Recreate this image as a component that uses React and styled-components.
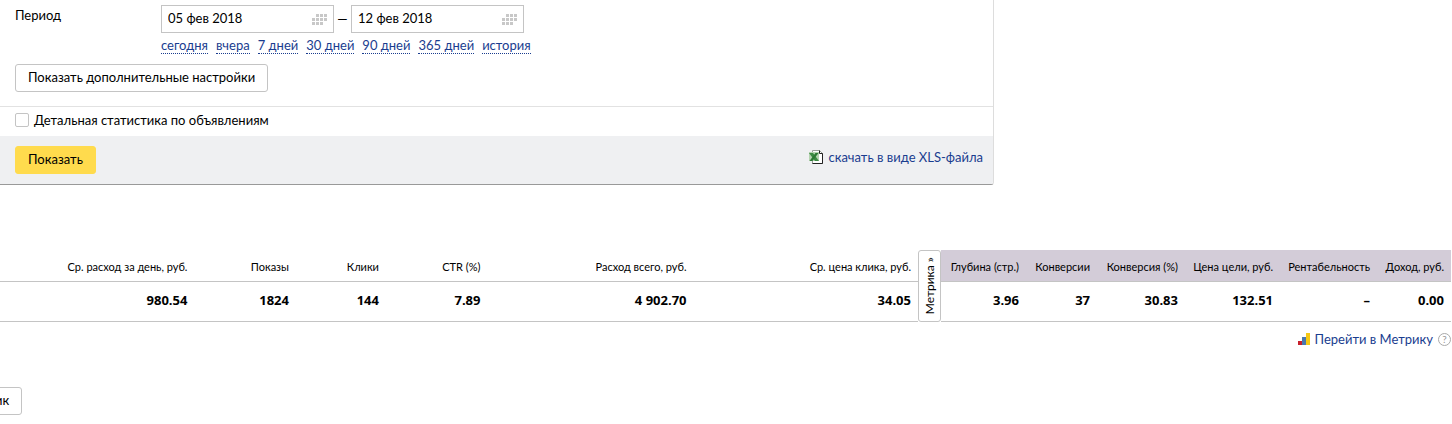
import React, { useState } from "react";
import styled, { createGlobalStyle } from "styled-components";

const GlobalStyle = createGlobalStyle`
  * {
    box-sizing: border-box;
  }

  body {
    margin: 0;
    background: #fff;
    color: #000;
    font-family: Lato, "Open Sans", sans-serif;
    font-size: 13px;
    line-height: 18px;
  }

  button,
  input {
    font: inherit;
    color: inherit;
  }
`;

const Page = styled.main`
  padding-right: 1px;
`;

const FilterForm = styled.form`
  max-width: 994px;
  border-right: 1px solid #ddd;
  border-bottom: 1px solid #999;
  border-bottom-right-radius: 3px;
  overflow: hidden;
`;

const FilterBody = styled.div`
  padding: 5px 15px 14px;
  border-bottom: 1px solid #e2e2e2;
`;

const PeriodRow = styled.div`
  display: grid;
  grid-template-columns: 146px 1fr;
  margin-bottom: 10px;
`;

const PeriodLabel = styled.div`
  padding-top: 1px;
`;

const DateRange = styled.div`
  display: flex;
  align-items: center;
  gap: 2px;
`;

const Dash = styled.span`
  width: 13px;
  text-align: center;
`;

const DateField = styled.label`
  display: flex;
  align-items: center;
  width: 173px;
  height: 28px;
  padding: 0 6px;
  border: 1px solid #c4c4c4;
`;

const DateInput = styled.input`
  flex: 1;
  min-width: 0;
  padding: 0 0 2px;
  border: 0;
  outline: 0;
  background: none;
`;

const Presets = styled.div`
  display: flex;
  gap: 8px;
  margin-top: 3px;
`;

const PresetLink = styled.a`
  height: 18px;
  line-height: 18px;
  color: #1a3d8f;
  text-decoration: none;
  border-bottom: 1px dotted #1a3d8f;
`;

const Button = styled.button`
  height: 28px;
  padding: 0 12px 2px;
  border: 1px solid ${(props) => (props.$primary ? "#ffdb4d" : "#c4c4c4")};
  border-radius: 3px;
  background: ${(props) => (props.$primary ? "#ffdb4d" : "#fff")};
  cursor: pointer;
`;

const CutButton = styled(Button)`
  margin: 39px 0 0 -18px;
`;

const CheckRow = styled.label`
  display: flex;
  align-items: center;
  gap: 5px;
  height: 29px;
  padding: 0 15px 3px;
`;

const Checkbox = styled.input`
  appearance: none;
  width: 14px;
  height: 14px;
  margin: 0;
  border: 1px solid #c4c4c4;
  border-radius: 2px;
  background: #fff;

  &:checked {
    background: #ffdb4d;
  }
`;

const FormFooter = styled.div`
  display: flex;
  align-items: flex-start;
  justify-content: space-between;
  height: 48px;
  padding: 10px 10px 0 15px;
  background: #eff0f2;
`;

const IconLink = styled.a`
  display: flex;
  align-items: center;
  gap: 5px;
  padding-top: 2px;
  color: #1a3d8f;
  text-decoration: none;
`;

const StatTable = styled.table`
  width: 100%;
  margin-top: 65px;
  table-layout: fixed;
  border-collapse: separate;
  border-spacing: 0;
`;

const HeadCell = styled.th`
  height: 32px;
  padding: 2px 7px 0 0;
  border-bottom: 1px solid #c4c4c4;
  background: ${(props) => (props.$metrika ? "#d3ccd8" : "none")};
  font-size: 11px;
  font-weight: 400;
  text-align: right;
  white-space: nowrap;
`;

const Cell = styled.td`
  height: 40px;
  padding: 0 7px 3px 0;
  border-bottom: 1px solid #c4c4c4;
  font-family: "Open Sans", sans-serif;
  font-weight: 700;
  text-align: right;
  white-space: nowrap;
`;

const ToggleCell = styled.td`
  height: 72px;
  padding: 0;
`;

const MetrikaToggle = styled.button`
  display: flex;
  align-items: center;
  justify-content: center;
  width: 100%;
  height: 72px;
  padding: 0;
  border: 1px solid #c4c4c4;
  border-radius: 3px;
  background: #fff;
  cursor: pointer;
`;

const VerticalText = styled.span`
  writing-mode: vertical-rl;
  transform: rotate(180deg);
  font-size: 12px;
`;

const TableFooter = styled.div`
  display: flex;
  align-items: center;
  justify-content: flex-end;
  gap: 5px;
  margin-top: 6px;
`;

const HelpButton = styled.button`
  width: 13px;
  height: 13px;
  margin-top: 2px;
  padding: 0;
  border: 1px solid #aaa;
  border-radius: 50%;
  background: none;
  color: #999;
  font-size: 10px;
  line-height: 11px;
  cursor: pointer;
`;

const Col = styled.col`
  width: ${(props) => props.$width || "auto"};
`;

const presets = [
  "сегодня",
  "вчера",
  "7 дней",
  "30 дней",
  "90 дней",
  "365 дней",
  "история",
];

const mainColumns = [
  { title: "Ср. расход за день, руб.", value: "980.54", width: "13.4%" },
  { title: "Показы", value: "1824", width: "7%" },
  { title: "Клики", value: "144", width: "6.2%" },
  { title: "CTR (%)", value: "7.89", width: "7%" },
  { title: "Расход всего, руб.", value: "4 902.70", width: "14.2%" },
  { title: "Ср. цена клика, руб.", value: "34.05" },
];

const metrikaColumns = [
  { title: "Глубина (стр.)", value: "3.96", width: "85px" },
  { title: "Конверсии", value: "37", width: "71px" },
  { title: "Конверсия (%)", value: "30.83", width: "88px" },
  { title: "Цена цели, руб.", value: "132.51", width: "95px" },
  { title: "Рентабельность", value: "–", width: "97px" },
  { title: "Доход, руб.", value: "0.00", width: "74px" },
];

// [x, y] of every day square
const days = [
  [4, 0], [8, 0], [12, 0],
  [0, 4], [4, 4], [8, 4], [12, 4],
  [0, 8], [4, 8], [8, 8],
];

function CalendarIcon() {
  return (
    <svg width="15" height="11" viewBox="0 0 15 11" aria-hidden="true">
      {days.map(([x, y]) => (
        <rect key={`${x}-${y}`} x={x} y={y} width="3" height="3" fill="#c8c8c8" />
      ))}
    </svg>
  );
}

function XlsIcon() {
  return (
    <svg width="14" height="14" viewBox="0 0 14 14" aria-hidden="true">
      <path d="M3.5 .5H10.5L13.5 3.5V13.5H3.5Z" fill="#fff" stroke="#9aa09a" />
      <path d="M10.5 .5V3.5H13.5V13.5H3.5" fill="none" stroke="#222" />
      <rect x="0" y="2" width="10" height="9" fill="#b5d3b0" />
      <path d="M0 3H4L10 11H6Z" fill="#3c8a43" />
      <path d="M6.5 3H9.5L3.5 11H.5Z" fill="#2c7a33" />
    </svg>
  );
}

function MetrikaIcon() {
  return (
    <svg width="12" height="12" viewBox="0 0 12 12" aria-hidden="true">
      <rect x="0" y="8" width="4" height="4" fill="#c8202c" />
      <rect x="4" y="4" width="4" height="8" fill="#4a78b0" />
      <rect x="8" y="0" width="4" height="12" fill="#f6c915" />
    </svg>
  );
}

function App() {
  const [from, setFrom] = useState("05 фев 2018");
  const [to, setTo] = useState("12 фев 2018");
  const [detailed, setDetailed] = useState(false);

  return (
    <Page>
      <GlobalStyle />
      <FilterForm onSubmit={(e) => e.preventDefault()}>
        <FilterBody>
          <PeriodRow>
            <PeriodLabel id="period">Период</PeriodLabel>
            <div>
              <DateRange>
                <DateField>
                  <DateInput
                    aria-labelledby="period"
                    value={from}
                    onChange={(e) => setFrom(e.target.value)}
                  />
                  <CalendarIcon />
                </DateField>
                <Dash>—</Dash>
                <DateField>
                  <DateInput
                    aria-labelledby="period"
                    value={to}
                    onChange={(e) => setTo(e.target.value)}
                  />
                  <CalendarIcon />
                </DateField>
              </DateRange>
              <Presets>
                {presets.map((name) => (
                  <PresetLink key={name} href="#">
                    {name}
                  </PresetLink>
                ))}
              </Presets>
            </div>
          </PeriodRow>
          <Button type="button">Показать дополнительные настройки</Button>
        </FilterBody>
        <CheckRow>
          <Checkbox
            type="checkbox"
            checked={detailed}
            onChange={(e) => setDetailed(e.target.checked)}
          />
          Детальная статистика по объявлениям
        </CheckRow>
        <FormFooter>
          <Button $primary type="submit">
            Показать
          </Button>
          <IconLink href="#">
            <XlsIcon />
            скачать в виде XLS-файла
          </IconLink>
        </FormFooter>
      </FilterForm>

      <StatTable>
        <colgroup>
          {mainColumns.map((col) => (
            <Col key={col.title} $width={col.width} />
          ))}
          <Col $width="23px" />
          {metrikaColumns.map((col) => (
            <Col key={col.title} $width={col.width} />
          ))}
        </colgroup>
        <tbody>
          <tr>
            {mainColumns.map((col) => (
              <HeadCell key={col.title} scope="col">
                {col.title}
              </HeadCell>
            ))}
            <ToggleCell rowSpan={2}>
              <MetrikaToggle type="button">
                <VerticalText>Метрика »</VerticalText>
              </MetrikaToggle>
            </ToggleCell>
            {metrikaColumns.map((col) => (
              <HeadCell key={col.title} scope="col" $metrika>
                {col.title}
              </HeadCell>
            ))}
          </tr>
          <tr>
            {mainColumns.map((col) => (
              <Cell key={col.title}>{col.value}</Cell>
            ))}
            {metrikaColumns.map((col) => (
              <Cell key={col.title}>{col.value}</Cell>
            ))}
          </tr>
        </tbody>
      </StatTable>

      <TableFooter>
        <IconLink href="#">
          <MetrikaIcon />
          Перейти в Метрику
        </IconLink>
        <HelpButton type="button">?</HelpButton>
      </TableFooter>

      <CutButton type="button">ик</CutButton>
    </Page>
  );
}

export default App;
